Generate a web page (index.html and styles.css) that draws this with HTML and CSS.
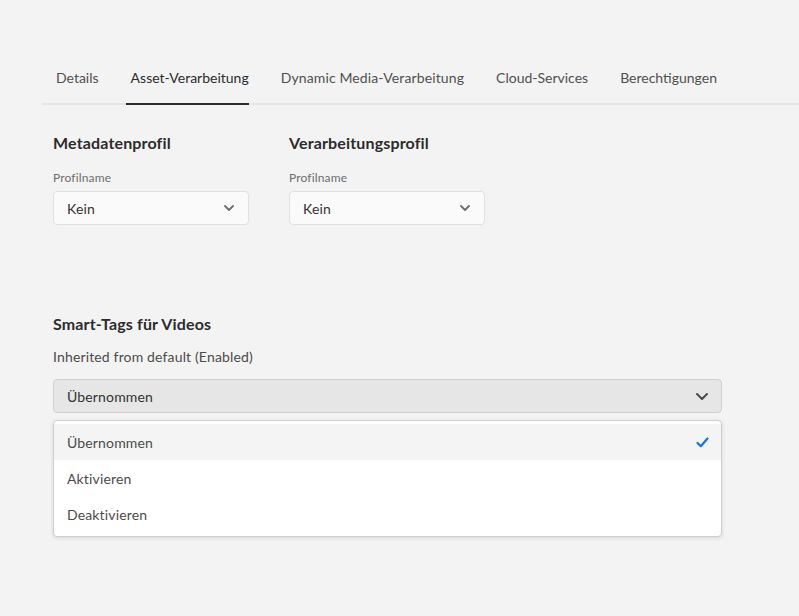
FILE: index.html
```html
<!DOCTYPE html>
<html lang="de">
<head>
<meta charset="utf-8">
<title>Ordnereigenschaften</title>
<link rel="stylesheet" href="styles.css">
</head>
<body>
<div class="page">
  <nav class="tabs">
    <div class="tab">Details</div>
    <div class="tab active">Asset-Verarbeitung</div>
    <div class="tab tab-loose">Dynamic Media-Verarbeitung</div>
    <div class="tab">Cloud-Services</div>
    <div class="tab">Berechtigungen</div>
  </nav>
  <div class="content">
    <div class="profiles">
      <div class="col">
        <h3 class="heading">Metadatenprofil</h3>
        <div class="label">Profilname</div>
        <div class="select">
          <span>Kein</span>
          <svg class="chev" width="10" height="6" viewBox="0 0 10 6"><path d="M1 1 L5 5 L9 1" fill="none" stroke="#6e6e6e" stroke-width="1.8" stroke-linecap="round" stroke-linejoin="round"/></svg>
        </div>
      </div>
      <div class="col">
        <h3 class="heading">Verarbeitungsprofil</h3>
        <div class="label">Profilname</div>
        <div class="select">
          <span>Kein</span>
          <svg class="chev" width="10" height="6" viewBox="0 0 10 6"><path d="M1 1 L5 5 L9 1" fill="none" stroke="#6e6e6e" stroke-width="1.8" stroke-linecap="round" stroke-linejoin="round"/></svg>
        </div>
      </div>
    </div>

    <section class="smart">
      <h3 class="heading">Smart-Tags für Videos</h3>
      <p class="desc">Inherited from default (Enabled)</p>
      <div class="select wide open">
        <span>Übernommen</span>
        <svg class="chev" width="12" height="7" viewBox="0 0 12 7"><path d="M1 1 L6 6 L11 1" fill="none" stroke="#4b4b4b" stroke-width="2" stroke-linecap="round" stroke-linejoin="round"/></svg>
      </div>
      <ul class="menu">
        <li class="item selected"><span>Übernommen</span>
          <svg class="check" width="13" height="11" viewBox="0 0 13 11"><path d="M1.5 6 L4.8 9.2 L11.5 1.5" fill="none" stroke="#1473e6" stroke-width="2.2" stroke-linecap="round" stroke-linejoin="round"/></svg>
        </li>
        <li class="item"><span>Aktivieren</span></li>
        <li class="item"><span>Deaktivieren</span></li>
      </ul>
    </section>
  </div>
</div>
</body>
</html>
```

FILE: styles.css
```css
* { box-sizing: border-box; }
html, body {
  margin: 0;
  padding: 0;
  background: #f3f3f3;
}
body {
  font-family: Lato, "Open Sans", "Liberation Sans", sans-serif;
  color: #4b4b4b;
  font-size: 14px;
  letter-spacing: 0.15px;
  width: 799px;
  height: 616px;
  overflow: hidden;
}
.page {
  padding: 53px 0 0 42px;
}
.tabs {
  display: flex;
  gap: 32px;
  padding-left: 14px;
  border-bottom: 2px solid #e6e6e6;
  letter-spacing: 0;
}
.tab {
  position: relative;
  height: 50px;
  line-height: 50px;
  font-size: 14px;
  color: #505050;
  white-space: nowrap;
}
.tab-loose {
  letter-spacing: 0.12px;
}
.tab.active {
  color: #2c2c2c;
}
.tab.active::after {
  content: "";
  position: absolute;
  left: -5px;
  right: 0;
  bottom: -2px;
  height: 2px;
  background: #2c2c2c;
}
.content {
  padding-left: 11px;
}
.profiles {
  display: flex;
  gap: 40px;
  padding-top: 28px;
}
.col {
  width: 196px;
  display: flex;
  flex-direction: column;
}
.heading {
  margin: 0;
  font-size: 16px;
  line-height: 20px;
  font-weight: 700;
  color: #2c2c2c;
}
.label {
  margin-top: 17px;
  font-size: 12px;
  line-height: 16px;
  color: #6e6e6e;
}
.select {
  margin-top: 5px;
  height: 34px;
  display: flex;
  align-items: center;
  justify-content: space-between;
  padding: 0 14px 0 13px;
  background: #fafafa;
  border: 1px solid #e1e1e1;
  border-radius: 4px;
  color: #323232;
  font-size: 14px;
}
.smart {
  padding-top: 89px;
  width: 669px;
}
.desc {
  margin: 14px 0 0;
  font-size: 14px;
  line-height: 18px;
  color: #4b4b4b;
}
.select.wide {
  margin-top: 13px;
  background: #e6e6e6;
  border-color: #cfcfcf;
  padding-right: 13px;
}
.menu {
  list-style: none;
  margin: 7px 0 0;
  padding: 3px 0 4px;
  background: #ffffff;
  border: 1px solid #cfcfcf;
  border-radius: 4px;
  box-shadow: 0 1px 4px rgba(0, 0, 0, 0.12);
}
.item {
  height: 36px;
  display: flex;
  align-items: center;
  justify-content: space-between;
  padding: 0 12px 0 13px;
  color: #4b4b4b;
  font-size: 14px;
}
.item.selected {
  background: #f4f4f4;
}
```
